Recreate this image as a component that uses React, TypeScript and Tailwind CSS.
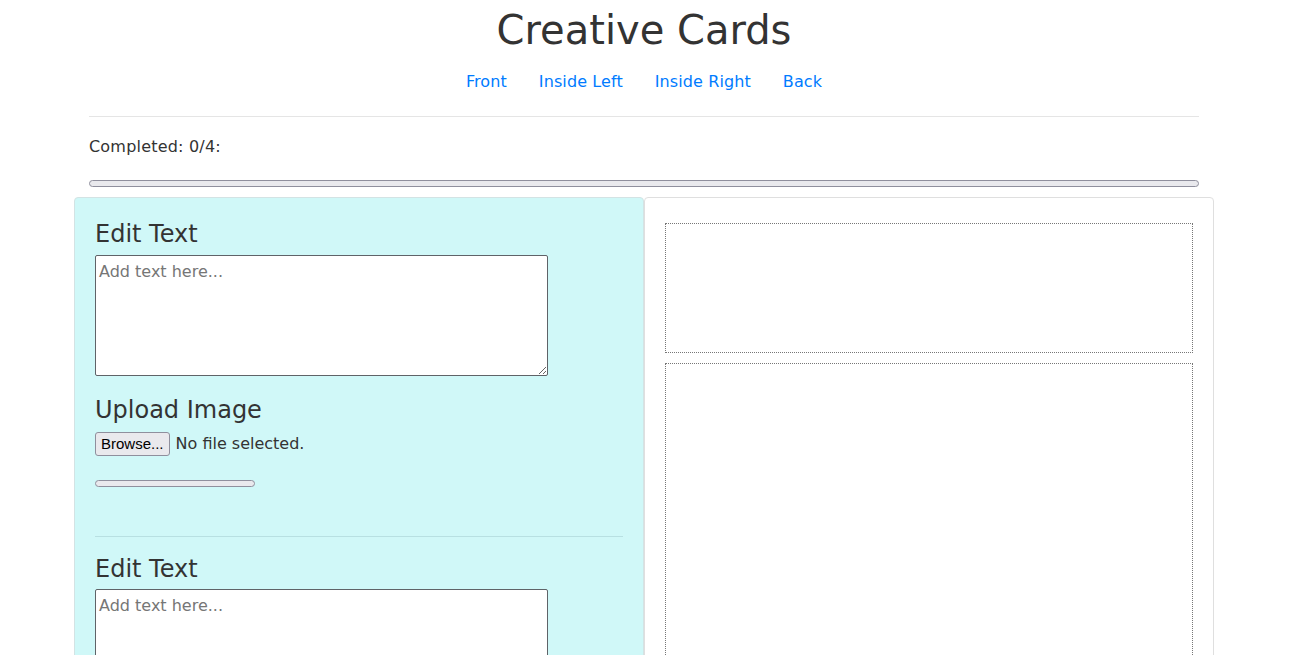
import React from 'react';

const font = { fontFamily: '"DejaVu Sans", Verdana, sans-serif' };

const ProgressBar = ({ className }: { className: string }) => (
  <div className={`rounded-full border border-[#8f8f9d] bg-[#e9e9ed] ${className}`} />
);

const EditText = () => (
  <>
    <h4 className="text-[24px] leading-[28.8px] text-[#333] pt-[2px] mb-[6px]">Edit Text</h4>
    <textarea
      placeholder="Add text here..."
      className="block w-[453px] h-[121px] border border-[#5f6368] rounded-[2px] bg-white px-[3px] pt-[6px] text-[16px] leading-[20px] placeholder:text-[#767676] text-[#333]"
    />
  </>
);

export default function App() {
  return (
    <div className="h-[655px] overflow-hidden bg-white text-[#333]" style={font}>
      <div className="w-[1140px] ml-[74px] px-[15px]">
        <h1 className="pt-[6px] text-[40px] leading-[48px] text-center mb-[6px]">Creative Cards</h1>
        <nav className="flex justify-center text-[16px] leading-6 tracking-[0.1px]">
          {['Front', 'Inside Left', 'Inside Right', 'Back'].map((l) => (
            <a key={l} href="#" className="px-4 pt-[10px] pb-[6px] text-[#007bff]">
              {l}
            </a>
          ))}
        </nav>
        <hr className="my-4 border-t border-[#e5e5e5]" />
        <p className="text-[16px] leading-6 pt-[2px] tracking-[0.2px]">Completed: 0/4:</p>
        <ProgressBar className="mt-[21px] w-full h-[7px]" />
        <div className="flex -mx-[15px] mt-[10px]">
          <div className="w-[570px] bg-[#d0f8f8] border border-[#d3e3e4] rounded-tl-[4px] rounded-tr-[4px] p-5 h-[470px]">
            <EditText />
            <h4 className="text-[24px] leading-[28.8px] pt-[1px] mt-[19px] mb-[7px]">Upload Image</h4>
            <div className="flex items-center h-6 text-[16px]">
              <button className="h-6 px-[5px] border border-[#8f8f9d] rounded-[3px] bg-[#e9e9ed] text-[15px] text-black leading-none" style={{ fontFamily: '"Liberation Sans", Arial, sans-serif' }}>
                Browse...
              </button>
              <span className="ml-[6px]">No file selected.</span>
            </div>
            <ProgressBar className="w-[160px] mt-6 h-[7px]" />
            <hr className="mt-[49px] mb-4 border-t border-[#b8e0e2]" />
            <EditText />
          </div>
          <div className="w-[570px] bg-white border border-[#dfdfdf] rounded-[4px] px-5 pt-[25px] h-[470px]">
            <div className="h-[130px] border border-dotted border-[#777]" />
            <div className="h-[400px] mt-[10px] border border-dotted border-[#777]" />
          </div>
        </div>
      </div>
    </div>
  );
}
